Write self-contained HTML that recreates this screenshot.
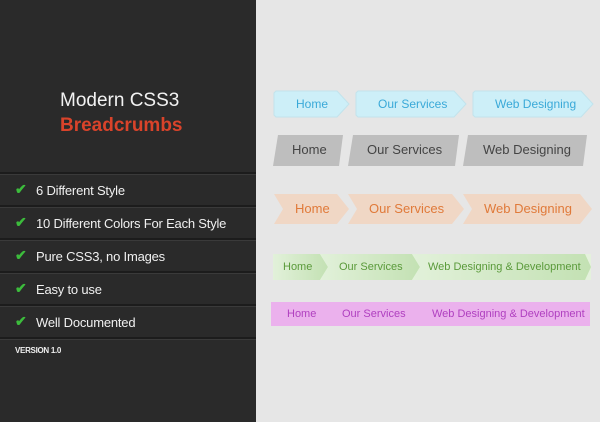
<!DOCTYPE html>
<html><head><meta charset="utf-8"><style>
*{margin:0;padding:0}
body{width:600px;height:422px;overflow:hidden;background:#e6e6e6;font-family:"Liberation Sans",sans-serif;position:relative}
#left{position:absolute;left:0;top:0;width:256px;height:422px;background:#2a2a2a}
.t{position:absolute;white-space:nowrap}
.sep{position:absolute;left:0;width:256px;height:2px;background:#1c1c1c;border-bottom:1px solid #3a3a3a}
.li{position:absolute;left:36px;color:#f0f0f0;font-size:13px;letter-spacing:-0.2px;white-space:nowrap}
.ck{position:absolute;left:15px;color:#3cbc3c;font-size:14px;font-weight:bold}
svg{position:absolute;left:0;top:0}
</style></head><body>
<div id="left">
<div class="t" style="left:60px;top:90px;color:#f2f2f2;font-size:19px">Modern CSS3</div>
<div class="t" style="left:60px;top:115px;color:#d9432a;font-size:19px;font-weight:bold">Breadcrumbs</div>
<div class="sep" style="top:172px"></div>
<div class="sep" style="top:205px"></div>
<div class="sep" style="top:238px"></div>
<div class="sep" style="top:271px"></div>
<div class="sep" style="top:304px"></div>
<div class="sep" style="top:337px"></div>
<div class="ck" style="top:181px">✔</div><div class="li" style="top:183px">6 Different Style</div>
<div class="ck" style="top:214px">✔</div><div class="li" style="top:216px">10 Different Colors For Each Style</div>
<div class="ck" style="top:247px">✔</div><div class="li" style="top:249px">Pure CSS3, no Images</div>
<div class="ck" style="top:280px">✔</div><div class="li" style="top:282px">Easy to use</div>
<div class="ck" style="top:313px">✔</div><div class="li" style="top:315px">Well Documented</div>
<div class="t" style="left:15px;top:346px;color:#eee;font-size:8px;font-weight:bold;letter-spacing:-0.3px">VERSION 1.0</div>
</div>
<svg width="600" height="422">
<defs><linearGradient id="g" x1="0" x2="1"><stop offset="0" stop-color="#e2f1da"/><stop offset="1" stop-color="#c3e1b3"/></linearGradient></defs>
<g fill="#cdeff8" stroke="#c2e3ec">
<polygon points="276,91 337,91 349,104 337,117 276,117 274,115 274,93"/>
<polygon points="358,91 454,91 466,104 454,117 358,117 356,115 356,93"/>
<polygon points="475,91 581,91 593,104 581,117 475,117 473,115 473,93"/>
</g>
<g fill="#bebebe">
<polygon points="278,135 343,135 339,166 273,166"/>
<polygon points="353,135 459,135 455,166 348,166"/>
<polygon points="468,135 587,135 583,166 463,166"/>
</g>
<g fill="#f0d7c5">
<polygon points="274,194 337,194 349,209 337,224 274,224 283,209"/>
<polygon points="348,194 452,194 464,209 452,224 348,224 357,209"/>
<polygon points="463,194 580,194 592,209 580,224 463,224 472,209"/>
</g>
<rect x="273" y="254" width="318" height="26" fill="#e4f1dc"/>
<g fill="url(#g)">
<polygon points="273,254 320,254 328,267 320,280 273,280"/>
<polygon points="328,254 412,254 420,267 412,280 320,280 328,267 320,254"/>
<polygon points="420,254 585,254 591,267 585,280 412,280 420,267 412,254"/>
</g>
<rect x="271" y="302" width="319" height="24" fill="#ebb1ed"/>
</svg>
<div class="t" style="left:296px;top:97px;font-size:12px;color:#3aa9d8">Home</div>
<div class="t" style="left:378px;top:97px;font-size:12px;color:#3aa9d8">Our Services</div>
<div class="t" style="left:495px;top:97px;font-size:12px;color:#3aa9d8">Web Designing</div>
<div class="t" style="left:292px;top:142px;font-size:13px;color:#444">Home</div>
<div class="t" style="left:367px;top:142px;font-size:13px;color:#444">Our Services</div>
<div class="t" style="left:483px;top:142px;font-size:13px;color:#444">Web Designing</div>
<div class="t" style="left:295px;top:201px;font-size:13px;color:#e07a3a">Home</div>
<div class="t" style="left:369px;top:201px;font-size:13px;color:#e07a3a">Our Services</div>
<div class="t" style="left:484px;top:201px;font-size:13px;color:#e07a3a">Web Designing</div>
<div class="t" style="left:283px;top:261px;font-size:11px;color:#5a9a3a">Home</div>
<div class="t" style="left:339px;top:261px;font-size:11px;color:#5a9a3a">Our Services</div>
<div class="t" style="left:428px;top:261px;font-size:11px;color:#5a9a3a">Web Designing &amp; Development</div>
<div class="t" style="left:287px;top:308px;font-size:11px;color:#b040c0">Home</div>
<div class="t" style="left:342px;top:308px;font-size:11px;color:#b040c0">Our Services</div>
<div class="t" style="left:432px;top:308px;font-size:11px;color:#b040c0">Web Designing &amp; Development</div>
</body></html>
